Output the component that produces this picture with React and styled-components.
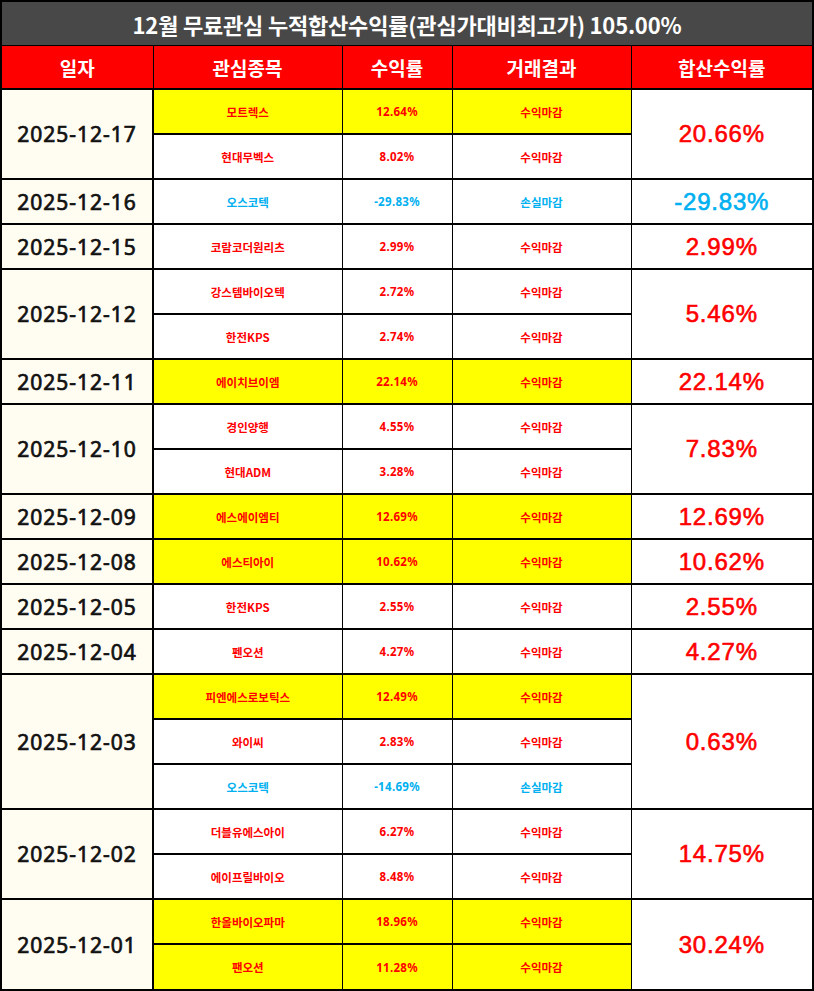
import styled, { createGlobalStyle } from "styled-components";

const GlobalStyle = createGlobalStyle`
  html, body {
    margin: 0;
    padding: 0;
    background: #ffffff;
  }
  * {
    box-sizing: border-box;
  }
`;

const RED = "#ff0000";
const BLUE = "#00b0f0";

const Board = styled.div`
  width: 814px;
  border: 2px solid #000;
  background: #fff;
`;

const Title = styled.div`
  height: 44px;
  display: flex;
  align-items: center;
  justify-content: center;
  background: #484848;
  color: #fff;
  font-family: "Noto Sans CJK KR", "Noto Sans", sans-serif;
  font-weight: 700;
  font-size: 22px;
  letter-spacing: -0.2px;
  border-bottom: 1px solid #000;
`;

const Table = styled.table`
  width: 810px;
  border-collapse: collapse;
  table-layout: fixed;
`;

const HeadCell = styled.th`
  height: 43px;
  padding: 0;
  background: ${RED};
  color: #fff;
  font-family: "Noto Sans CJK KR", "Noto Sans", sans-serif;
  font-weight: 700;
  font-size: 19px;
  border-left: 1px solid #000;
  border-bottom: 2px solid #000;
  &:first-child {
    border-left: none;
  }
`;

const DateCell = styled.td`
  padding: 0;
  height: 45px;
  background: #fffcf2;
  text-align: center;
  color: #111;
  font-family: "Noto Sans", sans-serif;
  font-weight: 400;
  -webkit-text-stroke: 0.7px #111;
  font-size: 21px;
  letter-spacing: 1px;
  border-top: 2px solid #000;
  border-right: 2px solid #000;
`;

const Cell = styled.td`
  padding: 0;
  height: 45px;
  background: ${(p) => (p.$hot ? "#ffff00" : "#ffffff")};
  color: ${(p) => (p.$loss ? BLUE : RED)};
  text-align: center;
  font-family: ${(p) =>
    p.$num
      ? `"Noto Sans", sans-serif`
      : `"Noto Sans CJK KR", "Noto Sans", sans-serif`};
  font-weight: 700;
  font-size: 11.5px;
  letter-spacing: ${(p) => (p.$num ? "0.3px" : "0")};
  border-top: 2px solid #000;
  border-left: 1px solid #000;
`;

const SumCell = styled.td`
  padding: 0;
  background: #fff;
  color: ${(p) => (p.$loss ? BLUE : RED)};
  text-align: center;
  font-family: "Liberation Sans", Arial, sans-serif;
  font-weight: 400;
  -webkit-text-stroke: 0.6px ${(p) => (p.$loss ? BLUE : RED)};
  font-size: 24px;
  letter-spacing: 0.8px;
  border-top: 2px solid #000;
  border-left: 1px solid #000;
`;

const days = [
  {
    date: "2025-12-17",
    sum: "20.66%",
    picks: [
      { name: "모트렉스", rate: "12.64%", hot: true },
      { name: "현대무벡스", rate: "8.02%" },
    ],
  },
  {
    date: "2025-12-16",
    sum: "-29.83%",
    loss: true,
    picks: [{ name: "오스코텍", rate: "-29.83%", loss: true }],
  },
  {
    date: "2025-12-15",
    sum: "2.99%",
    picks: [{ name: "코람코더원리츠", rate: "2.99%" }],
  },
  {
    date: "2025-12-12",
    sum: "5.46%",
    picks: [
      { name: "강스템바이오텍", rate: "2.72%" },
      { name: "한전KPS", rate: "2.74%" },
    ],
  },
  {
    date: "2025-12-11",
    sum: "22.14%",
    picks: [{ name: "에이치브이엠", rate: "22.14%", hot: true }],
  },
  {
    date: "2025-12-10",
    sum: "7.83%",
    picks: [
      { name: "경인양행", rate: "4.55%" },
      { name: "현대ADM", rate: "3.28%" },
    ],
  },
  {
    date: "2025-12-09",
    sum: "12.69%",
    picks: [{ name: "에스에이엠티", rate: "12.69%", hot: true }],
  },
  {
    date: "2025-12-08",
    sum: "10.62%",
    picks: [{ name: "에스티아이", rate: "10.62%", hot: true }],
  },
  {
    date: "2025-12-05",
    sum: "2.55%",
    picks: [{ name: "한전KPS", rate: "2.55%" }],
  },
  {
    date: "2025-12-04",
    sum: "4.27%",
    picks: [{ name: "펜오션", rate: "4.27%" }],
  },
  {
    date: "2025-12-03",
    sum: "0.63%",
    picks: [
      { name: "피엔에스로보틱스", rate: "12.49%", hot: true },
      { name: "와이씨", rate: "2.83%" },
      { name: "오스코텍", rate: "-14.69%", loss: true },
    ],
  },
  {
    date: "2025-12-02",
    sum: "14.75%",
    picks: [
      { name: "더블유에스아이", rate: "6.27%" },
      { name: "에이프릴바이오", rate: "8.48%" },
    ],
  },
  {
    date: "2025-12-01",
    sum: "30.24%",
    picks: [
      { name: "한올바이오파마", rate: "18.96%", hot: true },
      { name: "팬오션", rate: "11.28%", hot: true },
    ],
  },
];

function DayRows({ day }) {
  const span = day.picks.length;
  return day.picks.map((pick, i) => (
    <tr key={i}>
      {i === 0 && <DateCell rowSpan={span}>{day.date}</DateCell>}
      <Cell $hot={pick.hot} $loss={pick.loss}>{pick.name}</Cell>
      <Cell $hot={pick.hot} $loss={pick.loss} $num>
        {pick.rate}
      </Cell>
      <Cell $hot={pick.hot} $loss={pick.loss}>
        {pick.loss ? "손실마감" : "수익마감"}
      </Cell>
      {i === 0 && (
        <SumCell rowSpan={span} $loss={day.loss}>
          {day.sum}
        </SumCell>
      )}
    </tr>
  ));
}

export default function App() {
  return (
    <>
      <GlobalStyle />
      <Board>
        <Title>12월 무료관심 누적합산수익률(관심가대비최고가) 105.00%</Title>
        <Table>
          <colgroup>
            <col style={{ width: 151 }} />
            <col style={{ width: 189 }} />
            <col style={{ width: 110 }} />
            <col style={{ width: 179 }} />
            <col style={{ width: 181 }} />
          </colgroup>
          <thead>
            <tr>
              <HeadCell>일자</HeadCell>
              <HeadCell>관심종목</HeadCell>
              <HeadCell>수익률</HeadCell>
              <HeadCell>거래결과</HeadCell>
              <HeadCell>합산수익률</HeadCell>
            </tr>
          </thead>
          <tbody>
            {days.map((day) => (
              <DayRows key={day.date} day={day} />
            ))}
          </tbody>
        </Table>
      </Board>
    </>
  );
}
